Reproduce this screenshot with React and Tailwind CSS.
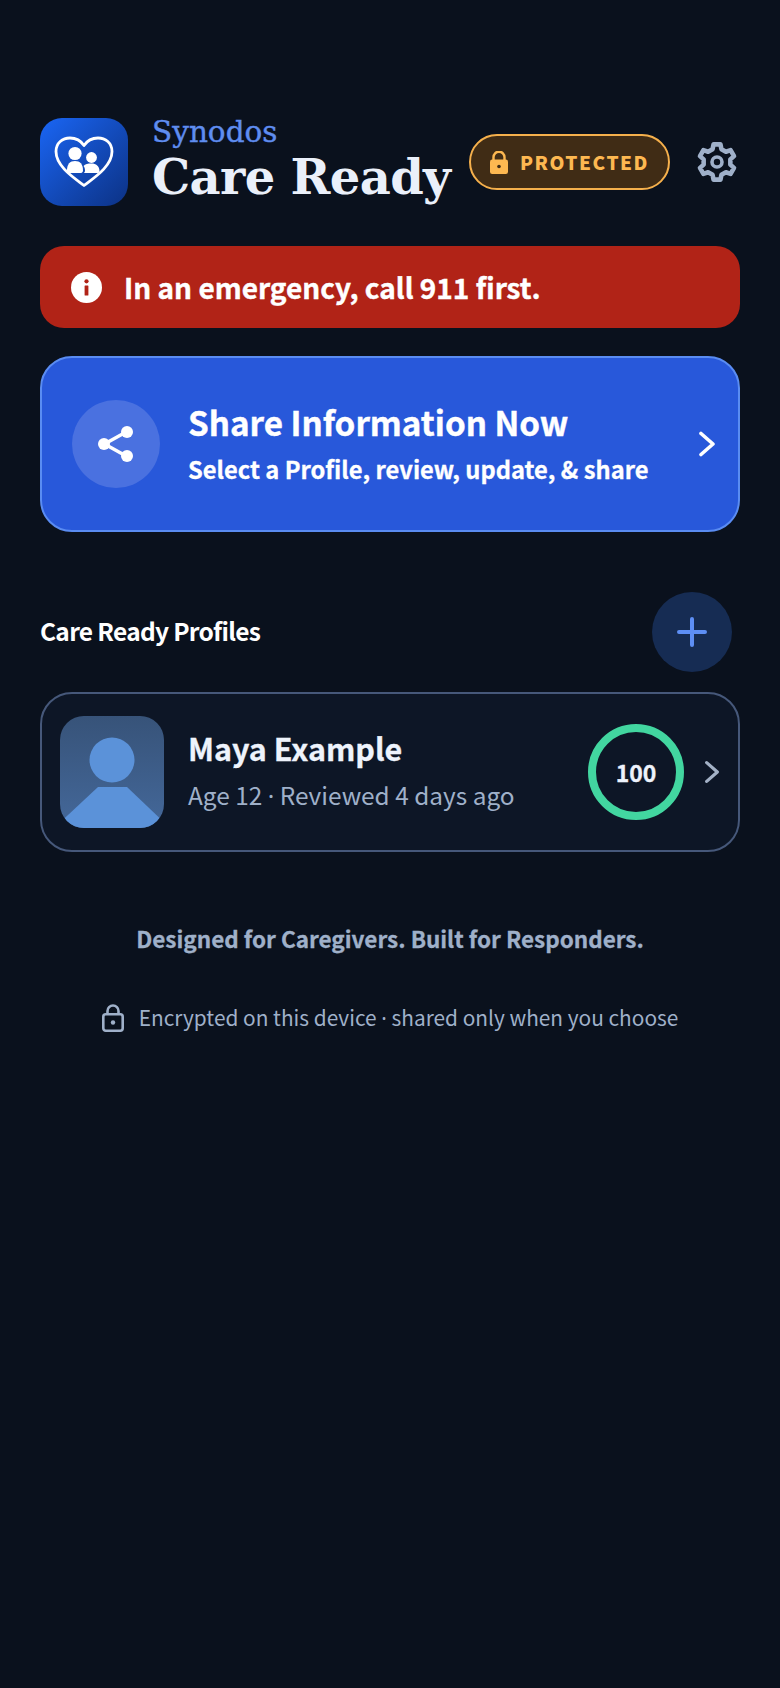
import React from "react";

function gearPath() {
  const c = 20, R = 18, r = 13.6;
  const pts = [];
  for (let i = 0; i < 6; i++) {
    const a = -90 + i * 60;
    for (const [rad, off] of [[r, -19], [R, -11], [R, 11], [r, 19]]) {
      const t = ((a + off) * Math.PI) / 180;
      pts.push(`${(c + rad * Math.cos(t)).toFixed(2)} ${(c + rad * Math.sin(t)).toFixed(2)}`);
    }
  }
  return "M" + pts.join(" L") + " Z";
}

function Logo() {
  return (
    <div className="w-[88px] h-[88px] shrink-0 rounded-[22px] bg-gradient-to-br from-[#1a66f5] to-[#0c3285] flex items-center justify-center">
      <svg width="60" height="52" viewBox="0 0 60 52" fill="none">
        <path d="M30 49.5 C22 43 2 31 2 15.5 C2 7 8.5 2 16 2 C22 2 27 5 30 9.5 C33 5 38 2 44 2 C51.5 2 58 7 58 15.5 C58 31 38 43 30 49.5 Z" stroke="white" strokeWidth="2.8" strokeLinejoin="round" />
        <circle cx="21" cy="17.5" r="6.6" fill="white" />
        <path d="M13 34.5 C13 28 16 25 21 25 C26 25 29 28 29 34.5 C29 36 28 37 27 37 H15 C14 37 13 36 13 34.5 Z" fill="white" />
        <circle cx="37.5" cy="21.5" r="5.4" fill="white" />
        <path d="M29.8 37 C30.6 36.5 31 35.5 31 34.5 C31 32 30 30.5 29.5 30 C31 28 34 27.5 37.5 27.5 C42 27.5 45.5 30 45.5 35 C45.5 36 44.7 37 43.7 37 Z" fill="white" />
      </svg>
    </div>
  );
}

function Gear() {
  return (
    <svg width="40" height="40" viewBox="0 0 40 40" fill="none" stroke="#9fb0c9" strokeLinejoin="round">
      <path d={gearPath()} strokeWidth="4.6" />
      <circle cx="20" cy="20" r="5" strokeWidth="3.6" />
    </svg>
  );
}

function Chevron({ color, w = 18, h = 26, sw = 3.6 }) {
  return (
    <svg width={w} height={h} viewBox="0 0 18 26" fill="none" stroke={color} strokeWidth={sw} strokeLinecap="round" strokeLinejoin="round">
      <path d="M3 2.5 L15 13 L3 23.5" />
    </svg>
  );
}

export default function App() {
  return (
    <div className="min-h-[1688px] w-[780px] bg-[#0a111d] px-10 pt-[118px] font-['Noto_Sans_CJK_SC','Noto_Sans',sans-serif]">
      <header className="flex items-center">
        <Logo />
        <div className="ml-6 flex flex-col">
          <div className="-mt-[2px] font-['DejaVu_Serif',serif] text-[29.5px] leading-[30px] font-normal text-[#5f8df0] [-webkit-text-stroke:0.4px_#5f8df0]">Synodos</div>
          <div className="mt-[2px] font-['DejaVu_Serif',serif] text-[48px] leading-[56px] font-bold tracking-[-0.65px] text-[#eaf0fa]">Care Ready</div>
        </div>
        <div className="ml-auto flex h-[56px] w-[201px] items-center justify-center gap-[12px] rounded-full border-2 border-[#f5b04c] bg-[#402c15]">
          <svg width="18" height="23" viewBox="0 0 18 23">
            <path d="M3.5 9.5V6.2a5.5 5.5 0 0 1 11 0V9.5" fill="none" stroke="#fdb851" strokeWidth="2.4" />
            <rect x="0" y="8.5" width="18" height="14.5" rx="2.2" fill="#fdb851" />
            <circle cx="9" cy="15.5" r="1.8" fill="#402c15" />
          </svg>
          <span className="-mt-[1px] text-[19px] leading-none font-black tracking-[1.5px] text-[#fdb851]">PROTECTED</span>
        </div>
        <div className="ml-[27px] mr-[3px] flex"><Gear /></div>
      </header>

      <div className="mt-10 flex h-[82px] items-center rounded-[24px] bg-[#b12317] pl-[31px]">
        <svg width="31" height="31" viewBox="0 0 31 31">
          <circle cx="15.5" cy="15.5" r="15.5" fill="white" />
          <rect x="13.6" y="13.5" width="3.8" height="10" rx="0.6" fill="#b12317" />
          <circle cx="15.5" cy="9.3" r="2.1" fill="#b12317" />
        </svg>
        <span className="ml-[22px] text-[28px] leading-none font-bold text-white [-webkit-text-stroke:0.4px_#ffffff]">In an emergency, call 911 first.</span>
      </div>

      <button className="mt-7 flex h-[176px] w-full items-center rounded-[32px] border-2 border-[#5a8cf2] bg-[#2858da] pl-[30px] pr-[22px] text-left">
        <span className="flex h-[88px] w-[88px] items-center justify-center rounded-full bg-[#4a71e0]">
          <svg width="36" height="38" viewBox="0 0 36 38" fill="none">
            <path d="M29 6.5 L6.5 19 L29 31.5" stroke="white" strokeWidth="3.4" />
            <circle cx="29" cy="7" r="6" fill="white" />
            <circle cx="6" cy="19" r="6" fill="white" />
            <circle cx="29" cy="31" r="6" fill="white" />
          </svg>
        </span>
        <span className="ml-[28px] flex flex-col">
          <span className="-mt-[3px] text-[33.2px] leading-[44px] font-bold text-white [-webkit-text-stroke:0.4px_#ffffff]">Share Information Now</span>
          <span className="mt-[8px] text-[23.7px] leading-[34px] font-bold text-white [-webkit-text-stroke:0.3px_#ffffff]">Select a Profile, review, update, &amp; share</span>
        </span>
        <span className="ml-auto flex"><Chevron color="#ffffff" /></span>
      </button>

      <div className="mt-[60px] flex items-center justify-between pr-2">
        <h2 className="pb-[2px] text-[24.5px] leading-none font-bold tracking-[-0.7px] text-white">Care Ready Profiles</h2>
        <button className="flex h-20 w-20 items-center justify-center rounded-full bg-[#162c53]">
          <svg width="30" height="30" viewBox="0 0 30 30" stroke="#5e8ff5" strokeWidth="4" strokeLinecap="round">
            <path d="M15 2 V28 M2 15 H28" />
          </svg>
        </button>
      </div>

      <div className="mt-5 flex h-[160px] items-center rounded-[32px] border-2 border-[#46587a] bg-[#0d1626] pl-[18px] pr-[18px]">
        <div className="relative h-[112px] w-[104px] shrink-0 overflow-hidden rounded-[24px] bg-gradient-to-b from-[#375379] to-[#44689a]">
          <svg width="104" height="112" viewBox="0 0 104 112" className="absolute inset-0">
            <circle cx="52" cy="44" r="22.5" fill="#5b92d9" />
            <path d="M38 71 H67 L110 112 H-6 Z" fill="#5b92d9" />
          </svg>
        </div>
        <div className="ml-6 flex flex-col">
          <div className="-mt-[3px] text-[30.5px] leading-[40px] font-bold text-[#eef3fc] [-webkit-text-stroke:0.3px_#eef3fc]">Maya Example</div>
          <div className="mt-[10px] text-[24.4px] leading-[34px] font-normal text-[#9fb0c9]">Age 12 <span className="font-['Noto_Sans',sans-serif]">·</span> Reviewed 4 days ago</div>
        </div>
        <div className="ml-auto flex h-24 w-24 items-center justify-center rounded-full border-[8px] border-[#42d6a0]">
          <span className="text-[23px] leading-none font-bold text-[#eef3fc] [-webkit-text-stroke:0.3px_#eef3fc]">100</span>
        </div>
        <span className="ml-[20px] flex"><Chevron color="#a3b1c6" w={16} h={26} /></span>
      </div>

      <p className="mt-[75px] text-center text-[22.5px] leading-none font-bold text-[#9fb0c9] [-webkit-text-stroke:0.3px_#9fb0c9]">Designed for Caregivers. Built for Responders.</p>

      <div className="mt-[54px] flex items-center justify-center gap-[15px]">
        <svg width="22" height="28" viewBox="0 0 22 28" fill="none" stroke="#9fb0c9" strokeWidth="2.6">
          <rect x="1.3" y="10.3" width="19.4" height="16.4" rx="2.4" />
          <path d="M5.5 10V7a5.5 5.5 0 0 1 11 0v3" />
          <circle cx="11" cy="18.5" r="2.2" fill="#9fb0c9" stroke="none" />
        </svg>
        <span className="text-[20.85px] leading-none font-normal text-[#9fb0c9]">Encrypted on this device <span className="font-['Noto_Sans',sans-serif]">·</span> shared only when you choose</span>
      </div>
    </div>
  );
}
